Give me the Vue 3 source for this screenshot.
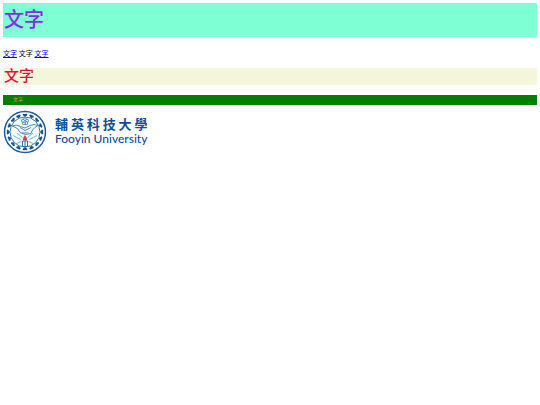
<template>
  <div class="page">
    <h1 class="title">文字</h1>
    <p class="links">
      <a href="#">文字</a> 文字 <a href="#">文字</a>
    </p>
    <h2 class="subtitle">文字</h2>
    <div class="note">文字</div>
    <div class="logo">
      <svg class="emblem" viewBox="0 0 88 88" aria-hidden="true">
        <circle cx="44" cy="44" r="41" fill="#fff" stroke="#1f5a9c" stroke-width="3" />
        <g fill="#17558f">
          <path
            v-for="angle in leaves"
            :key="angle"
            d="M44 14 L39 10 Q40 6 44 8 Q48 6 49 10 Z"
            :transform="`rotate(${angle} 44 44)`"
          />
        </g>
        <circle cx="44" cy="44" r="30" fill="#f5fbff" stroke="#3977b0" stroke-width="2" />
        <g fill="#fff" stroke="#5c8fbd" stroke-width="2">
          <circle v-for="angle in petals" :key="angle" cx="44" cy="19" r="3" :transform="`rotate(${angle} 44 23)`" />
          <circle cx="44" cy="23" r="2" />
        </g>
        <g stroke="#69bce0" stroke-width="2">
          <path d="M20 51 L35 59 M68 51 L53 59 M25 68 L37 63 M63 68 L51 63 M28 46 L39 55 M60 46 L49 55" />
        </g>
        <path
          d="M18 32 Q27 28 35 33 L44 36 L54 31 Q62 27 70 31 Q64 34 59 40 L56 47 Q44 52 34 45 L30 38 Q24 34 18 32 Z"
          fill="#eef6fb"
          stroke="#5a8bb2"
          stroke-width="2"
        />
        <path d="M34 35 L44 41 L56 35 M38 46 L51 46" fill="none" stroke="#5a8bb2" stroke-width="2" />
        <path d="M44 50 Q50 57 47 61 H41 Q38 57 44 50 Z" fill="#e33945" />
        <path d="M39 62 H49 V73 H39 Z M44 62 V73" fill="#fff" stroke="#326fa9" stroke-width="2" />
      </svg>
      <div class="names">
        <div class="zh"><span v-for="char in school" :key="char">{{ char }}</span></div>
        <div class="en">Fooyin University</div>
      </div>
    </div>
  </div>
</template>

<script setup>
const school = "輔英科技大學";
const leaves = Array.from({ length: 16 }, (_, i) => i * 22.5);
const petals = [0, 72, 144, 216, 288];
</script>

<style>
body {
  margin: 0;
  background: #fff;
}
</style>

<style scoped>
.page {
  padding: 3px;
  font-family: "Liberation Serif", "Noto Sans CJK TC", sans-serif;
  font-size: 7px;
  color: #000;
}

.title {
  margin: 0;
  padding-left: 1px;
  font-size: 20px;
  line-height: 34px;
  font-weight: 500;
  color: blueviolet;
  background: aquamarine;
}

.links {
  margin: 13px 0 10px;
  line-height: 8px;
}

.links a {
  color: #0000ee;
}

.subtitle {
  margin: 0;
  padding-left: 1px;
  font-size: 15px;
  line-height: 17px;
  font-weight: 500;
  color: crimson;
  background: beige;
}

.note {
  margin-top: 10px;
  padding-left: 10px;
  font-size: 5px;
  line-height: 10px;
  color: goldenrod;
  background: green;
}

.logo {
  display: flex;
  align-items: center;
  gap: 8px;
  margin-top: 5px;
}

.emblem {
  width: 44px;
  height: 44px;
}

.names {
  color: #0f4e96;
}

.zh {
  display: flex;
  justify-content: space-between;
  font-size: 13px;
  line-height: 14px;
  font-weight: 700;
}

.en {
  font-family: Lato, sans-serif;
  font-size: 12px;
  line-height: 14px;
  font-weight: 500;
}
</style>
